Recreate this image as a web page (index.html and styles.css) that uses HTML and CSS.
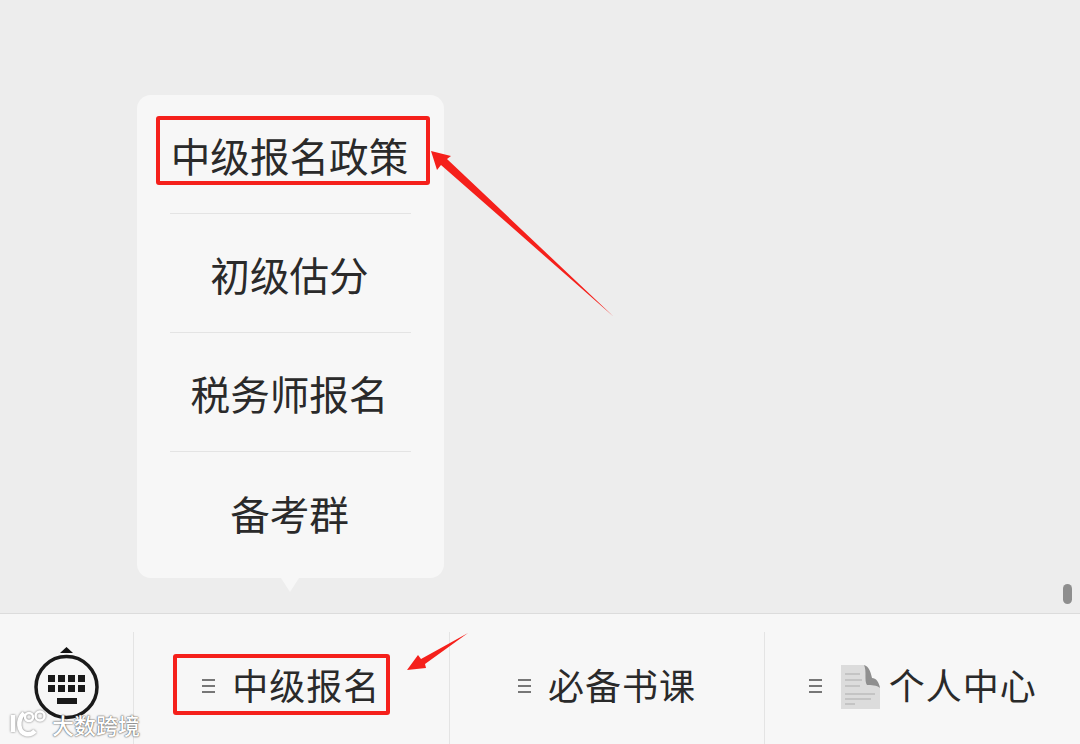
FILE: index.html
```html
<!DOCTYPE html>
<html lang="zh-CN">

<head>
  <meta charset="UTF-8">
  <title>菜单</title>
  <link rel="stylesheet" href="styles.css">
</head>

<body>
  <div class="page">
    <div class="content">
      <div class="scrollbar"></div>

      <!-- 弹出菜单 -->
      <div class="popup">
        <div class="popup-item">中级报名政策</div>
        <div class="popup-item">初级估分</div>
        <div class="popup-item">税务师报名</div>
        <div class="popup-item last">备考群</div>
        <div class="popup-tail"></div>
      </div>
    </div>

    <!-- 底部菜单 -->
    <div class="menubar">
      <div class="keyboard">
        <svg width="70" height="74" viewBox="0 0 70 74">
          <path d="M32.500 0 L26 6 L39 6 Z" fill="#111" />
          <circle cx="32.500" cy="40" r="30.500" fill="none" stroke="#1a1a1a" stroke-width="3.500" />
          <g fill="#1a1a1a">
            <rect x="14" y="28" width="7" height="7" />
            <rect x="24" y="28" width="7" height="7" />
            <rect x="34" y="28" width="7" height="7" />
            <rect x="44" y="28" width="7" height="7" />
            <rect x="14" y="38" width="7" height="7" />
            <rect x="24" y="38" width="7" height="7" />
            <rect x="34" y="38" width="7" height="7" />
            <rect x="44" y="38" width="7" height="7" />
            <rect x="23" y="51" width="20" height="6" />
          </g>
        </svg>
      </div>
      <div class="menu-cell">
        <span class="lines"><i></i><i></i><i></i></span>
        <span class="menu-text">中级报名</span>
      </div>
      <div class="menu-cell">
        <span class="lines"><i></i><i></i><i></i></span>
        <span class="menu-text">必备书课</span>
      </div>
      <div class="menu-cell">
        <span class="lines"><i></i><i></i><i></i></span>
        <svg class="doc" width="40" height="45" viewBox="0 0 40 45">
          <path d="M0 0 H23 C26 2 26 10 27 15 C33 15 38 17 39 23 V44 H0 Z" fill="#dcdcdc" />
          <path d="M23 0 C28 1 30 8 31 13 C35 13 38 17 39 23 C36 20 30 20 26 20 C23 16 26 6 23 0 Z" fill="#8f8f8f" />
          <g fill="#c4c4c4">
            <rect x="4" y="8" width="15" height="2" />
            <rect x="4" y="14" width="17" height="2" />
            <rect x="4" y="20" width="15" height="2" />
            <rect x="4" y="28" width="30" height="2" />
            <rect x="4" y="33" width="26" height="2" />
            <rect x="4" y="38" width="10" height="2" />
          </g>
        </svg>
        <span class="menu-text">个人中心</span>
      </div>
    </div>

    <!-- 红色标注 -->
    <div class="mark mark-top"></div>
    <div class="mark mark-bottom"></div>
    <svg class="arrows" width="1080" height="744" viewBox="0 0 1080 744">
      <path d="M431 151 L451 156 L447 159 L614 317 L441 165 L437 170 Z" fill="#f5201b" />
      <path d="M407 670 L418 655 L421 659 L468 633 L425 664 L426 668 Z" fill="#f5201b" />
    </svg>

    <!-- 水印 -->
    <div class="watermark">
      <svg width="40" height="28" viewBox="0 0 40 28">
        <g fill="none" stroke="#fff" stroke-width="4.500">
          <path d="M4 5 V22" />
          <path d="M15 3 C8 10 9 22 17 24 C21 25 24 23 26 21" />
          <circle cx="20" cy="7" r="4" stroke-width="2.500" />
          <circle cx="31" cy="6" r="4.500" stroke-width="2.500" />
        </g>
      </svg>
      <span>大数跨境</span>
    </div>
  </div>
</body>

</html>
```

FILE: styles.css
```css
* {
  box-sizing: border-box;
}

body {
  margin: 0;
  padding: 0;
  background-color: #ededed;
  font-family: "Noto Sans CJK SC", "Noto Sans", sans-serif;
  color: #2a2a2a;
}

.page {
  position: relative;
  width: 1080px;
  height: 744px;
  overflow: hidden;
}

.content {
  position: relative;
  height: 613px;
}

.scrollbar {
  position: absolute;
  left: 1063px;
  top: 584px;
  width: 9px;
  height: 20px;
  border-radius: 5px;
  background-color: #8e8e8e;
}

.popup {
  position: absolute;
  left: 137px;
  top: 95px;
  width: 307px;
  height: 483px;
  padding: 0 33px;
  border-radius: 14px;
  background-color: #f7f7f7;
}

.popup-item {
  display: flex;
  align-items: center;
  justify-content: center;
  height: 119px;
  padding: 1px 2px 0 0;
  border-bottom: 1px solid #e4e4e4;
  font-size: 39.6px;
  white-space: nowrap;
}

.popup-item.last {
  height: 126px;
  padding: 0 2px 5px 0;
  border-bottom: none;
}

.popup-tail {
  position: absolute;
  left: 144px;
  top: 483px;
  width: 0;
  height: 0;
  border-left: 9px solid transparent;
  border-right: 9px solid transparent;
  border-top: 14px solid #f7f7f7;
}

.menubar {
  display: flex;
  height: 131px;
  padding-top: 18px;
  border-top: 1px solid #dcdcdc;
  background-color: #f7f7f7;
}

.keyboard {
  width: 134px;
  padding: 15px 0 0 34px;
  border-right: 1px solid #e4e4e4;
}

.keyboard svg {
  display: block;
}

.menu-cell {
  display: flex;
  flex: 1;
  align-items: center;
  justify-content: center;
  height: 112px;
  padding-bottom: 4px;
  border-right: 1px solid #e4e4e4;
}

.menu-cell:last-child {
  border-right: none;
}

.lines {
  display: flex;
  flex-direction: column;
  gap: 4px;
  width: 13px;
  margin-right: 17px;
}

.lines i {
  display: block;
  height: 2px;
  background-color: #777;
}

.doc {
  margin: 2px 8px 0 2px;
  filter: blur(0.6px);
}

.menu-text {
  padding-bottom: 4px;
  font-size: 36px;
  letter-spacing: 1px;
  white-space: nowrap;
}

.mark {
  position: absolute;
  border: 4px solid #f5201b;
  border-radius: 3px;
}

.mark-top {
  left: 156px;
  top: 116px;
  width: 274px;
  height: 69px;
}

.mark-bottom {
  left: 173px;
  top: 654px;
  width: 217px;
  height: 61px;
}

.arrows {
  position: absolute;
  left: 0;
  top: 0;
}

.watermark {
  position: absolute;
  left: 9px;
  top: 708px;
  display: flex;
  align-items: center;
  gap: 3px;
  color: #fff;
  font-size: 22px;
  font-weight: 500;
  text-shadow: 0 0 2px #555, 0 0 1px #555;
}

.watermark svg {
  display: block;
  filter: drop-shadow(0 0 1px #777);
}
```
